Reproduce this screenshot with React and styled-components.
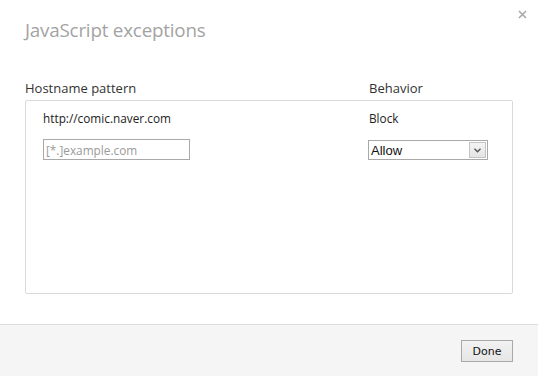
import React from "react";
import styled, { createGlobalStyle } from "styled-components";

const Global = createGlobalStyle`
  html, body { margin: 0; padding: 0; background: #fff; }
  body { font-family: "Open Sans", "Noto Sans", sans-serif; }
  * { box-sizing: border-box; }
`;

const Dialog = styled.div`
  width: 538px;
  height: 376px;
  background: #fff;
  display: flex;
  flex-direction: column;
  position: relative;
`;

const Close = styled.button`
  position: absolute;
  top: 7px;
  right: 9px;
  width: 14px;
  height: 14px;
  padding: 0;
  border: 0;
  background: none;
  display: flex;
  align-items: center;
  justify-content: center;
`;

const Body = styled.div`
  flex: 1;
  padding: 17px 25px 0 25px;
  display: flex;
  flex-direction: column;
`;

const Title = styled.h1`
  margin: 0;
  font-weight: 400;
  font-size: 18.8px;
  line-height: 26px;
  color: #a3a3a3;
  letter-spacing: -0.2px;
`;

const HeaderRow = styled.div`
  margin-top: 36px;
  display: grid;
  grid-template-columns: 344px 1fr;
  font-size: 13px;
  line-height: 18px;
  color: #333;
`;

const ListBox = styled.div`
  margin-top: 3px;
  height: 194px;
  border: 1px solid #dadada;
  border-radius: 2px;
  padding: 6px 0 0 17px;
  display: flex;
  flex-direction: column;
  gap: 11px;
`;

const Row = styled.div`
  display: grid;
  grid-template-columns: 326px 1fr;
  align-items: center;
  height: 21px;
  font-size: 11.8px;
  color: #222;
`;

const TextInput = styled.input`
  width: 147px;
  height: 21px;
  border: 1px solid #a9a9a9;
  padding: 0 2px;
  font-family: inherit;
  font-size: 11.8px;
  color: #222;
  outline: none;
  &::placeholder { color: #9a9a9a; }
`;

const SelectBox = styled.div`
  width: 120px;
  height: 20px;
  margin-left: -1px;
  margin-top: 1px;
  border: 1px solid #a9a9a9;
  display: flex;
  align-items: stretch;
  font-family: "Liberation Sans", Arial, sans-serif;
  font-size: 13px;
  color: #111;
`;

const SelectValue = styled.span`
  flex: 1;
  display: flex;
  align-items: center;
  padding-left: 2px;
`;

const SelectArrow = styled.span`
  width: 17px;
  margin: 1px;
  border: 1px solid #c4c4c4;
  background: linear-gradient(#f4f4f4, #e4e4e4);
  display: flex;
  align-items: center;
  justify-content: center;
`;

const Footer = styled.div`
  height: 52px;
  border-top: 1px solid #dcdcdc;
  background: #f5f5f5;
  display: flex;
  justify-content: flex-end;
  align-items: flex-start;
  padding: 15px 25px 0 0;
`;

const Button = styled.button`
  width: 52px;
  height: 22px;
  border: 1px solid #a9a9a9;
  background: linear-gradient(#f2f2f2, #e6e6e6);
  font-family: "DejaVu Sans", Tahoma, sans-serif;
  font-size: 11px;
  color: #111;
  padding: 0;
`;

export default function App() {
  return (
    <>
      <Global />
      <Dialog>
        <Close aria-label="close">
          <svg width="9" height="9" viewBox="0 0 9 9">
            <path d="M1 1L8 8M8 1L1 8" stroke="#a8a8a8" strokeWidth="1.6" />
          </svg>
        </Close>
        <Body>
          <Title>JavaScript exceptions</Title>
          <HeaderRow>
            <span>Hostname pattern</span>
            <span>Behavior</span>
          </HeaderRow>
          <ListBox>
            <Row>
              <span>http://comic.naver.com</span>
              <span>Block</span>
            </Row>
            <Row>
              <TextInput placeholder="[*.]example.com" />
              <SelectBox>
                <SelectValue>Allow</SelectValue>
                <SelectArrow>
                  <svg width="7" height="5" viewBox="0 0 7 5">
                    <path d="M0.5 0.8L3.5 3.8L6.5 0.8" stroke="#555" strokeWidth="1.4" fill="none" />
                  </svg>
                </SelectArrow>
              </SelectBox>
            </Row>
          </ListBox>
        </Body>
        <Footer>
          <Button>Done</Button>
        </Footer>
      </Dialog>
    </>
  );
}
